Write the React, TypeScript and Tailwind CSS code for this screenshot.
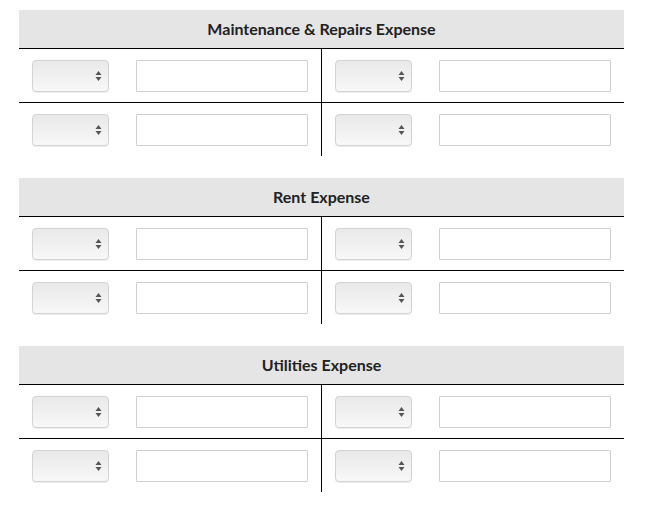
import React from 'react';

const sections = ['Maintenance & Repairs Expense', 'Rent Expense', 'Utilities Expense'];

function FakeSelect() {
  return (
    <div className="relative h-[32px] w-[77px] shrink-0 rounded-[4px] border border-[#d3d3d3] bg-gradient-to-b from-[#e9e9e9] to-[#f8f8f8] shadow-[0_1px_1px_rgba(0,0,0,0.08)]">
      <svg
        className="absolute right-[6px] top-1/2 -translate-y-1/2"
        width="7"
        height="11"
        viewBox="0 0 7 11"
      >
        <path d="M3.5 0.5 L6.5 4.5 L0.5 4.5 Z" fill="#555" />
        <path d="M3.5 10.5 L6.5 6.5 L0.5 6.5 Z" fill="#555" />
      </svg>
    </div>
  );
}

function Cell({ left }: { left?: boolean }) {
  return (
    <div
      className={
        'flex items-center gap-[27px] px-[13px] ' +
        (left ? 'w-[303px] border-r border-black' : 'w-[302px]')
      }
    >
      <FakeSelect />
      <input
        type="text"
        className="h-[32px] w-[172px] rounded-[1px] border border-[#cfcfcf] bg-white outline-none"
      />
    </div>
  );
}

function Section({ title }: { title: string }) {
  return (
    <div className="w-[605px]">
      <div className="flex h-[39px] items-center justify-center border-b border-black bg-[#e5e5e5]">
        <span className="text-[16px] font-bold text-[#222]">{title}</span>
      </div>
      <div className="flex h-[54px] border-b border-black">
        <Cell left />
        <Cell />
      </div>
      <div className="flex h-[53px]">
        <Cell left />
        <Cell />
      </div>
    </div>
  );
}

export default function App() {
  return (
    <div
      className="min-h-screen bg-white pl-[19px] pt-[10px]"
      style={{ fontFamily: 'Lato, "Liberation Sans", sans-serif' }}
    >
      <div className="flex flex-col gap-[22px]">
        {sections.map((s) => (
          <Section key={s} title={s} />
        ))}
      </div>
    </div>
  );
}
